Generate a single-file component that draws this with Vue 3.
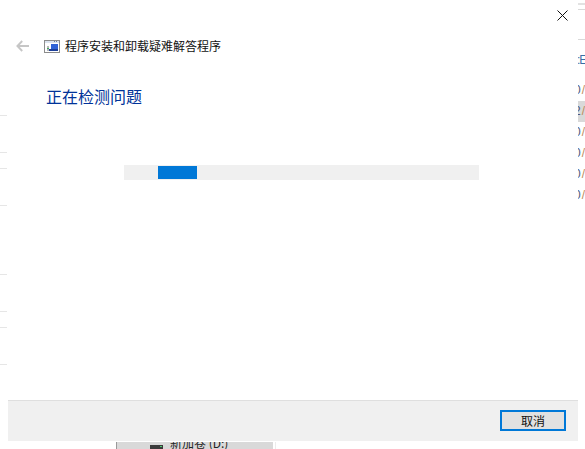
<script setup>
const leftTicks = [115, 152, 168, 205, 274, 311, 327, 364]
const rightRows = [
  { text: '0', on: false },
  { text: '2', on: true },
  { text: '0', on: false },
  { text: '0', on: false },
  { text: '0', on: false },
  { text: '0', on: false },
]
</script>

<template>
  <div class="screen">
    <div class="behind-left">
      <i v-for="y in leftTicks" :key="y" class="tick" :style="{ top: y + 'px' }"></i>
    </div>

    <main class="dialog">
      <div class="close-row">
        <svg class="close" width="11" height="11" viewBox="0 0 11 11">
          <path d="M0.5 0.5L10.5 10.5M10.5 0.5L0.5 10.5" stroke="#111" stroke-width="1" fill="none" />
        </svg>
      </div>

      <div class="title-row">
        <svg class="back" width="13" height="12" viewBox="0 0 13 12">
          <path d="M6.2 1L1.4 6L6.2 11M1.4 6H13" stroke="#c6c6c6" stroke-width="1.9" fill="none" />
        </svg>
        <svg class="app-icon" width="16" height="13" viewBox="0 0 16 13">
          <rect x="0.5" y="0.5" width="15" height="12" fill="#fff" stroke="#8c8c8c" />
          <rect x="1" y="1" width="14" height="2" fill="#dbe3ef" />
          <rect x="10" y="1" width="1" height="1" fill="#6f7f99" />
          <rect x="12" y="1" width="1" height="1" fill="#6f7f99" />
          <rect x="7" y="4" width="7" height="5" fill="#2f62d6" />
          <rect x="5" y="9" width="9" height="2" fill="#1d3f9a" />
          <rect x="3" y="6" width="2" height="5" fill="#b7b7b7" />
          <rect x="3" y="8" width="2" height="1" fill="#3fa860" />
        </svg>
        <span class="title">程序安装和卸载疑难解答程序</span>
      </div>

      <h1 class="heading">正在检测问题</h1>

      <div class="track">
        <div class="fill"></div>
      </div>

      <div class="footer">
        <button class="cancel">取消</button>
      </div>
    </main>

    <div class="behind-right">
      <i class="line wide" style="top: 3px"></i>
      <i class="line" style="top: 9px"></i>
      <i class="line" style="top: 39px"></i>
      <span class="head-frag">:E</span>
      <div class="rows">
        <div v-for="(r, i) in rightRows" :key="i" class="row" :class="{ on: r.on }">
          <span class="digit">{{ r.text }}</span><span class="slash">/</span>
        </div>
      </div>
    </div>

    <div class="behind-bottom">
      <div class="drive">
        <span class="drive-icon"><b></b></span>
        <span class="drive-name">新加卷 (D:)</span>
      </div>
    </div>
  </div>
</template>

<style scoped>
.screen {
  position: relative;
  width: 585px;
  height: 449px;
  overflow: hidden;
  background: #fff;
  font-family: "Noto Sans CJK SC", "Liberation Sans", sans-serif;
}
.behind-left {
  position: absolute;
  left: 0;
  top: 0;
  width: 7px;
  height: 441px;
}
.tick {
  position: absolute;
  left: 0;
  width: 7px;
  height: 1px;
  background: #e6e6e6;
}
.dialog {
  position: absolute;
  left: 8px;
  top: 0;
  width: 570px;
  height: 441px;
  display: flex;
  flex-direction: column;
  background: #fff;
}
.close-row {
  display: flex;
  justify-content: flex-end;
  padding: 10px 10px 0 0;
  height: 30px;
  box-sizing: border-box;
}
.close {
  display: block;
}
.title-row {
  display: flex;
  align-items: center;
  height: 16px;
  margin-top: 8px;
  padding-left: 8px;
}
.back {
  flex: none;
}
.app-icon {
  flex: none;
  margin-left: 15px;
}
.title {
  margin-left: 5px;
  font-size: 12px;
  line-height: 16px;
  color: #111;
}
.heading {
  margin: 31px 0 0 38px;
  font-size: 16px;
  line-height: 22px;
  font-weight: 400;
  color: #003399;
}
.track {
  width: 355px;
  height: 15px;
  margin: 58px 0 0 116px;
  padding: 1px 0;
  box-sizing: border-box;
  background: #f0f0f0;
}
.fill {
  width: 39px;
  height: 13px;
  margin-left: 34px;
  background: #0078d7;
}
.footer {
  margin-top: auto;
  height: 41px;
  box-sizing: border-box;
  border-top: 1px solid #dfdfdf;
  background: #f0f0f0;
  display: flex;
  justify-content: flex-end;
  align-items: flex-start;
  padding: 9px 12px 0 0;
}
.cancel {
  width: 66px;
  height: 21px;
  padding: 0;
  box-sizing: border-box;
  border: 2px solid #0078d7;
  background: #e1e1e1;
  font-family: inherit;
  font-size: 12px;
  line-height: 16px;
  color: #111;
}
.behind-right {
  position: absolute;
  left: 578px;
  top: 0;
  width: 7px;
  height: 441px;
  overflow: hidden;
  font-family: "Liberation Sans", sans-serif;
  font-size: 12px;
  color: #4a5a80;
}
.line {
  position: absolute;
  left: 0;
  width: 7px;
  height: 1px;
  background: #d9d9d9;
}
.line.wide {
  height: 2px;
  background: #e2e2e2;
}
.head-frag {
  position: absolute;
  left: -1px;
  top: 53px;
  line-height: 14px;
  letter-spacing: -1px;
  color: #3a6ea5;
  white-space: nowrap;
}
.rows {
  position: absolute;
  left: 0;
  top: 80px;
  width: 7px;
}
.row {
  height: 21px;
  line-height: 21px;
  white-space: nowrap;
}
.row.on {
  background: #d9d9d9;
}
.digit {
  display: inline-block;
  margin-left: -4px;
}
.slash {
  color: #c08a5a;
  margin-left: 1px;
}
.behind-bottom {
  position: absolute;
  left: 116px;
  top: 442px;
  width: 157px;
  height: 7px;
  box-sizing: border-box;
  border-left: 1px solid #9a9a9a;
  background: #d9d9d9;
  box-shadow: 2px 0 0 #fff, 3px 0 0 #ececec;
}
.drive {
  height: 7px;
  overflow: hidden;
  display: flex;
  align-items: flex-start;
  padding-left: 33px;
}
.drive-icon {
  position: relative;
  flex: none;
  width: 13px;
  height: 5px;
  margin-top: 3px;
  background: #3c3c3c;
}
.drive-icon b {
  position: absolute;
  right: 1px;
  top: 1px;
  width: 2px;
  height: 1px;
  background: #4ecb71;
}
.drive-name {
  margin: -7px 0 0 7px;
  font-size: 12px;
  line-height: 16px;
  color: #222;
  white-space: nowrap;
}
</style>
